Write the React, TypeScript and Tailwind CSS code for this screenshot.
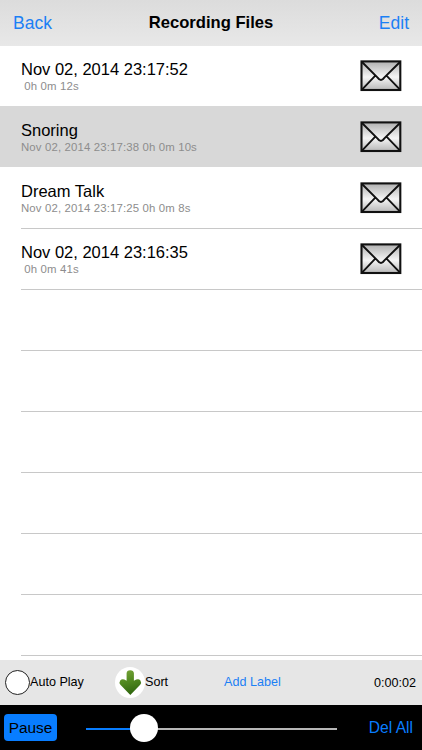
import { useState } from "react";

interface Recording {
  title: string;
  details: string;
}

const recordings: Recording[] = [
  { title: "Nov 02, 2014 23:17:52", details: " 0h 0m 12s" },
  { title: "Snoring", details: "Nov 02, 2014 23:17:38 0h 0m 10s" },
  { title: "Dream Talk", details: "Nov 02, 2014 23:17:25 0h 0m 8s" },
  { title: "Nov 02, 2014 23:16:35", details: " 0h 0m 41s" },
];

const EMPTY_ROWS = 7;

function MailIcon({ id }: { id: string }) {
  return (
    <svg width="42" height="32" viewBox="0 0 42 32" aria-hidden="true">
      <defs>
        <linearGradient id={id} x1="0" y1="0" x2="0" y2="1">
          <stop offset="0" stopColor="#b0b0b0" />
          <stop offset="0.55" stopColor="#f5f5f5" />
          <stop offset="1" stopColor="#b8b8b8" />
        </linearGradient>
      </defs>
      <rect x="1.5" y="1.4" width="38.8" height="28.6" fill={`url(#${id})`} stroke="#111" strokeWidth="2.1" />
      <path
        d="M2 2 L17.6 17.6 Q21 22.4 24.2 17.6 L40 2 M2 29.6 L15.3 15.6 M40 29.6 L26.5 15.6"
        fill="none"
        stroke="#111"
        strokeWidth="1.9"
      />
    </svg>
  );
}

function SortIcon() {
  return (
    <svg width="30" height="31" viewBox="0 0 30 31" aria-hidden="true">
      <defs>
        <linearGradient id="sort-arrow" x1="0" y1="0" x2="0.25" y2="1">
          <stop offset="0" stopColor="#79a63a" />
          <stop offset="0.5" stopColor="#528a20" />
          <stop offset="1" stopColor="#326810" />
        </linearGradient>
      </defs>
      <ellipse cx="15" cy="15.5" rx="15" ry="15.5" fill="#fff" />
      <path
        d="M11.6 6.3 Q11.8 3.2 15.2 3.2 Q18.7 3.2 18.9 6.3 V13.8 L21.2 12.6 Q23.8 11.5 25.4 13.4 Q26.9 15.7 25.2 17.8 L15.3 28 L5.4 17.8 Q3.7 15.5 5.2 13.4 Q7 11.5 9.3 12.6 L11.6 13.8 Z"
        fill="url(#sort-arrow)"
      />
    </svg>
  );
}

export default function App() {
  const [selected, setSelected] = useState(1);
  const [isPlaying, setIsPlaying] = useState(true);
  const [progress] = useState(23.3);

  return (
    <div className="flex h-[750px] w-[422px] flex-col overflow-hidden bg-white font-['Liberation_Sans',Arial,sans-serif] text-black">
      <header className="grid h-[46px] shrink-0 grid-cols-[1fr_auto_1fr] items-center bg-gradient-to-b from-[#dcdcdc] to-[#e8e8e8] pr-[13px] pl-[13px] leading-[46px]">
        <button className="text-left text-[17.5px] text-[#1b80f5]">Back</button>
        <h1 className="text-[16.6px] font-bold">Recording Files</h1>
        <button className="text-right text-[17.5px] text-[#1b80f5]">Edit</button>
      </header>

      <main className="flex min-h-0 flex-1 flex-col overflow-hidden">
        {recordings.map((recording, index) => (
          <div
            key={recording.title}
            onClick={() => setSelected(index)}
            className={`shrink-0 pl-[21px] ${index === 0 ? "h-[60px]" : "h-[61px]"} ${
              index === selected ? "bg-[#d8d8d8]" : "bg-white"
            }`}
          >
            <div
              className={`flex h-full items-start justify-between border-[#c8c8c8] pr-[20px] ${
                index > selected + 1 ? "border-t" : index > 0 ? "border-t border-transparent" : ""
              }`}
            >
              <div className="pt-[14px]">
                <p className="text-[16.5px] leading-[19px]">{recording.title}</p>
                <p className="pt-px text-[11.4px] leading-[13px] tracking-[0.14px] whitespace-pre text-[#8d8d8d]">
                  {recording.details}
                </p>
              </div>
              <button className="pt-[14px]" aria-label="Mail recording">
                <MailIcon id={`mail-${index}`} />
              </button>
            </div>
          </div>
        ))}
        {Array.from({ length: EMPTY_ROWS }, (_, index) => (
          <div key={index} className="h-[61px] shrink-0 pl-[21px]">
            <div className="h-full border-t border-[#c8c8c8]" />
          </div>
        ))}
      </main>

      <div className="flex h-[45px] shrink-0 items-center bg-[#e6e6e6] text-[12.6px]">
        <label className="flex w-[115px] items-center pl-[5px]">
          <span className="size-[25px] rounded-full border border-[#222] bg-white" />
          Auto Play
        </label>
        <button className="flex w-[109px] items-center">
          <SortIcon />
          Sort
        </button>
        <button className="text-[#1b80f5]">Add Label</button>
        <span className="ml-auto pt-px pr-[6px]">0:00:02</span>
      </div>

      <footer className="flex h-[45px] shrink-0 items-center bg-black">
        <button
          onClick={() => setIsPlaying(!isPlaying)}
          className="ml-[4px] h-[27px] w-[53px] rounded-[4px] bg-[#087dff] pt-px text-[15.4px] leading-[26px]"
        >
          {isPlaying ? "Pause" : "Play"}
        </button>
        <div className="relative ml-[29px] h-[28px] w-[251px]">
          <div className="flex h-full items-center pt-[2px]">
            <div className="h-[2px] bg-[#087dff]" style={{ width: `${progress}%` }} />
            <div className="h-[2px] flex-1 bg-[#b7b7b7]" />
          </div>
          <div
            className="absolute top-0 size-[28px] -translate-x-1/2 rounded-full bg-white"
            style={{ left: `${progress}%` }}
          />
        </div>
        <button className="mr-[9px] ml-auto pt-px text-[15.6px] text-[#087dff]">Del All</button>
      </footer>
    </div>
  );
}
